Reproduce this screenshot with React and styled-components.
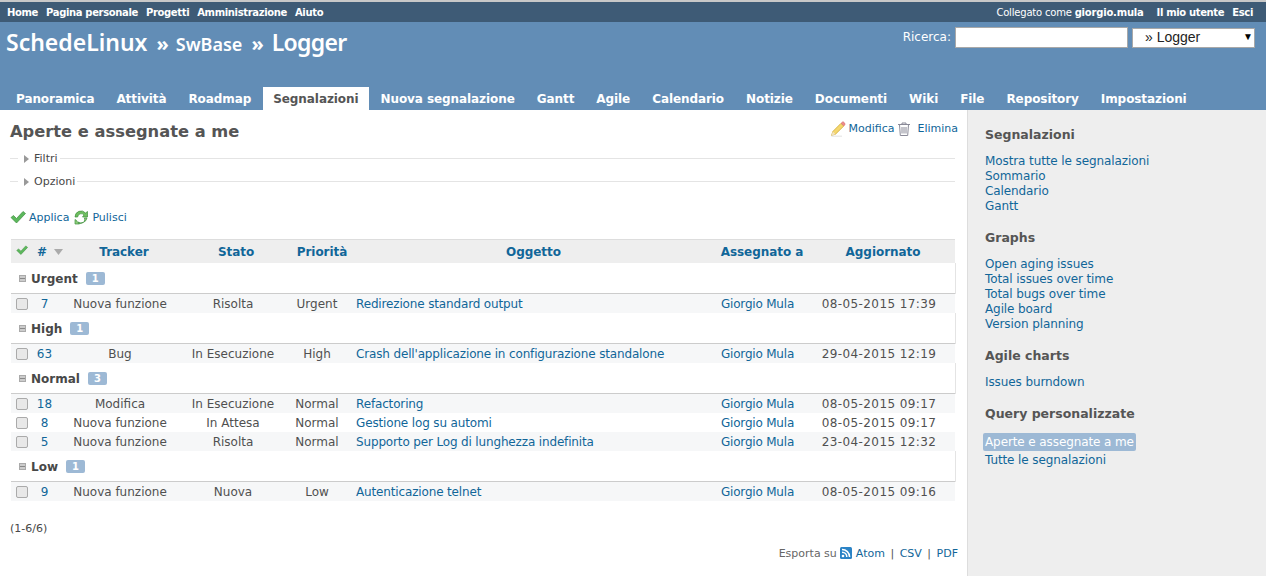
import React from 'react';
import styled, { createGlobalStyle } from 'styled-components';

const GlobalStyle = createGlobalStyle`
  html, body { margin: 0; padding: 0; height: 576px; overflow: hidden; background: #fff; }
  body { font-family: "DejaVu Sans", Verdana, sans-serif; font-size: 12px; color: #484848; }
  * { box-sizing: border-box; }
  a { color: #169; text-decoration: none; }
`;

const columns = [
  { label: 'Tracker', width: 128, shift: 8 },
  { label: 'Stato', width: 98, shift: 6 },
  { label: 'Priorità', width: 70, shift: 10 },
  { label: 'Oggetto', width: 361, shift: 2 },
  { label: 'Assegnato a', width: 98, shift: 0 },
  { label: 'Aggiornato', width: 144, shift: 0 },
];

const groups = [
  {
    name: 'Urgent', count: 1, rows: [
      { id: 7, tracker: 'Nuova funzione', status: 'Risolta', priority: 'Urgent', subject: 'Redirezione standard output', updated: '08-05-2015 17:39' },
    ],
  },
  {
    name: 'High', count: 1, rows: [
      { id: 63, tracker: 'Bug', status: 'In Esecuzione', priority: 'High', subject: "Crash dell'applicazione in configurazione standalone", updated: '29-04-2015 12:19' },
    ],
  },
  {
    name: 'Normal', count: 3, rows: [
      { id: 18, tracker: 'Modifica', status: 'In Esecuzione', priority: 'Normal', subject: 'Refactoring', updated: '08-05-2015 09:17' },
      { id: 8, even: true, tracker: 'Nuova funzione', status: 'In Attesa', priority: 'Normal', subject: 'Gestione log su automi', updated: '08-05-2015 09:17' },
      { id: 5, tracker: 'Nuova funzione', status: 'Risolta', priority: 'Normal', subject: 'Supporto per Log di lunghezza indefinita', updated: '23-04-2015 12:32' },
    ],
  },
  {
    name: 'Low', count: 1, rows: [
      { id: 9, tracker: 'Nuova funzione', status: 'Nuova', priority: 'Low', subject: 'Autenticazione telnet', updated: '08-05-2015 09:16' },
    ],
  },
];

const tabs = ['Panoramica', 'Attività', 'Roadmap', 'Segnalazioni', 'Nuova segnalazione', 'Gantt', 'Agile', 'Calendario', 'Notizie', 'Documenti', 'Wiki', 'File', 'Repository', 'Impostazioni'];

const sidebar = [
  { title: 'Segnalazioni', links: ['Mostra tutte le segnalazioni', 'Sommario', 'Calendario', 'Gantt'] },
  { title: 'Graphs', links: ['Open aging issues', 'Total issues over time', 'Total bugs over time', 'Agile board', 'Version planning'] },
  { title: 'Agile charts', links: ['Issues burndown'] },
  { title: 'Query personalizzate', links: ['Aperte e assegnate a me', 'Tutte le segnalazioni'], selected: 0 },
];

const CheckIcon = ({ size = 16 }) => (
  <svg width={size} height={size} viewBox="0 0 16 16">
    <path d="M1 8.5 L3.5 6.5 L6.5 9.5 L13 2.5 L15.5 4.5 L6.5 14 Z" fill="#5cb85c" stroke="#3f8f3f" strokeWidth="0.7" strokeLinejoin="round" />
  </svg>
);

const ReloadIcon = () => (
  <svg width="16" height="16" viewBox="0 0 16 16">
    <path d="M2 8 A6 6 0 0 1 12.5 4 L14.5 2.5 L14.5 8 L9.5 8 L11 6 A3.6 3.6 0 0 0 4.6 8 Z" fill="#6fbf5f" stroke="#3f8f3f" strokeWidth="0.7" strokeLinejoin="round" />
    <path d="M14 9 A6 6 0 0 1 5 13 L6.5 15 L2 15 L2 10.5 L3.6 11.5 A3.6 3.6 0 0 0 11.4 9 Z" fill="#8fd07a" stroke="#3f8f3f" strokeWidth="0.7" strokeLinejoin="round" />
  </svg>
);

const PencilIcon = () => (
  <svg width="16" height="16" viewBox="0 0 16 16">
    <path d="M1.5 14.5 L2.8 10.5 L11 2.3 L13.8 5 L5.5 13.2 Z" fill="#f5d76e" stroke="#c9a227" strokeWidth="0.7" strokeLinejoin="round" />
    <path d="M11 2.3 L12.2 1.2 C12.8 .7 13.4 .8 13.9 1.3 L14.8 2.2 C15.2 2.7 15.2 3.4 14.8 3.9 L13.8 5 Z" fill="#ee8a8a" stroke="#cc6a6a" strokeWidth="0.5" />
    <path d="M1.5 14.5 L2.8 10.5 L5.5 13.2 Z" fill="#f3e3c0" />
    <path d="M1.5 15.2 L12 15.2" stroke="#e6e6e6" strokeWidth="1.2" />
  </svg>
);

const TrashIcon = () => (
  <svg width="16" height="16" viewBox="0 0 16 16" fill="none" stroke="#8a8a98" strokeWidth="1">
    <path d="M2 3.5 H14" />
    <path d="M6 3.5 V2 H10 V3.5" />
    <path d="M3.5 3.5 L4.3 14.5 H11.7 L12.5 3.5" />
    <path d="M6 6 V12.5 M8 6 V12.5 M10 6 V12.5" />
  </svg>
);

const RssIcon = () => (
  <svg width="12" height="12" viewBox="0 0 12 12">
    <rect width="12" height="12" rx="1.5" fill="#2b83c6" />
    <circle cx="3" cy="9" r="1.3" fill="#fff" />
    <path d="M2 5.2 A4.8 4.8 0 0 1 6.8 10 M2 2.4 A7.6 7.6 0 0 1 9.6 10" fill="none" stroke="#fff" strokeWidth="1.5" />
  </svg>
);

const SortIcon = () => (
  <svg width="9" height="6" viewBox="0 0 9 6"><path d="M0 0 H9 L4.5 6 Z" fill="#aaa" /></svg>
);

const App = () => (
  <Page>
    <GlobalStyle />
    <TopMenu>
      <TopLinks>
        {['Home', 'Pagina personale', 'Progetti', 'Amministrazione', 'Aiuto'].map((item) => <TopLink key={item}>{item}</TopLink>)}
      </TopLinks>
      <TopLinks>
        <LoggedAs>Collegato come <b>giorgio.mula</b></LoggedAs>
        <TopLink>Il mio utente</TopLink>
        <TopLink>Esci</TopLink>
      </TopLinks>
    </TopMenu>
    <Header>
      <HeaderRow>
        <Title>
          <span>SchedeLinux</span>
          <Chevron>»</Chevron>
          <Crumb>SwBase</Crumb>
          <Chevron>»</Chevron>
          <ProjectName>Logger</ProjectName>
        </Title>
        <SearchBox>
          <SearchLabel>Ricerca:</SearchLabel>
          <SearchInput />
          <ProjectSelect>» Logger<SelectArrow>▼</SelectArrow></ProjectSelect>
        </SearchBox>
      </HeaderRow>
      <Tabs>
        {tabs.map((tab) => <Tab key={tab} $selected={tab === 'Segnalazioni'}>{tab}</Tab>)}
      </Tabs>
    </Header>
    <Main>
      <Content>
        <TitleRow>
          <Heading>Aperte e assegnate a me</Heading>
          <Actions>
            <PencilIcon /><ActionLink>Modifica</ActionLink>
            <TrashIcon /><ActionLink>Elimina</ActionLink>
          </Actions>
        </TitleRow>
        <Collapsed><Arrow />Filtri</Collapsed>
        <Collapsed><Arrow />Opzioni</Collapsed>
        <Buttons>
          <CheckIcon /><ButtonLink>Applica</ButtonLink>
          <ReloadIcon /><ButtonLink>Pulisci</ButtonLink>
        </Buttons>
        <IssueTable>
          <colgroup>
            <col width="22" />
            <col width="23" />
            {columns.map((c) => <col key={c.label} width={c.width} />)}
          </colgroup>
          <thead>
            <tr>
              <HeadCell><CheckIcon size={12} /></HeadCell>
              <IdHead>#<SortIcon /></IdHead>
              {columns.map((c) => <HeadCell key={c.label} $shift={c.shift}>{c.label}</HeadCell>)}
            </tr>
          </thead>
          <tbody>
            {groups.map((group) => (
              <React.Fragment key={group.name}>
                <GroupRow>
                  <td colSpan={8}>
                    <GroupLabel>
                      <Collapser />
                      {group.name}
                      <Badge>{group.count}</Badge>
                    </GroupLabel>
                  </td>
                </GroupRow>
                {group.rows.map((row) => (
                  <IssueRow key={row.id} $even={row.even}>
                    <td><FakeCheck /></td>
                    <td><a>{row.id}</a></td>
                    <td>{row.tracker}</td>
                    <td>{row.status}</td>
                    <td>{row.priority}</td>
                    <SubjectCell><a>{row.subject}</a></SubjectCell>
                    <AssigneeCell><a>Giorgio Mula</a></AssigneeCell>
                    <DateCell>{row.updated}</DateCell>
                  </IssueRow>
                ))}
              </React.Fragment>
            ))}
          </tbody>
        </IssueTable>
        <Pagination>(1-6/6)</Pagination>
        <Export>
          Esporta su <RssIcon /> <a>Atom</a> <Sep>|</Sep> <a>CSV</a> <Sep>|</Sep> <a>PDF</a>
        </Export>
      </Content>
      <Sidebar>
        {sidebar.map((section) => (
          <section key={section.title}>
            <SideTitle>{section.title}</SideTitle>
            <SideLinks>
              {section.links.map((link, i) => (
                <SideItem key={link} $selected={section.selected === i}>
                  <SideLink $selected={section.selected === i}>{link}</SideLink>
                </SideItem>
              ))}
            </SideLinks>
          </section>
        ))}
      </Sidebar>
    </Main>
  </Page>
);

const Page = styled.div`
  height: 576px;
  border-top: 2px solid #c8c8c8;
  display: flex;
  flex-direction: column;
  overflow: hidden;
`;

const TopMenu = styled.div`
  height: 20px;
  background: #3e5b76;
  color: #fff;
  display: flex;
  justify-content: space-between;
  align-items: center;
  padding: 0 13px 0 7px;
  font-size: 10px;
  letter-spacing: -0.35px;
`;

const TopLinks = styled.div`
  display: flex;
  gap: 8px;
`;

const TopLink = styled.span`
  font-weight: bold;
`;

const LoggedAs = styled.span`
  margin-right: 5px;
  letter-spacing: -0.2px;
`;

const Header = styled.div`
  height: 88px;
  background: #628db6;
  color: #fff;
  display: flex;
  flex-direction: column;
  justify-content: space-between;
`;

const HeaderRow = styled.div`
  display: flex;
  justify-content: space-between;
  align-items: flex-start;
  padding: 5px 11px 0 6px;
`;

const Title = styled.div`
  display: flex;
  align-items: baseline;
  gap: 7px;
  font-family: "Noto Sans", sans-serif;
  font-size: 23px;
  line-height: 30px;
  font-weight: 600;
`;

const Crumb = styled.span`
  font-size: 18px;
`;

const Chevron = styled.span`
  font-size: 20px;
  font-weight: 700;
  margin-left: 2px;
`;

const ProjectName = styled.span`
  margin-left: 1px;
  letter-spacing: -0.7px;
`;

const SearchBox = styled.div`
  display: flex;
  align-items: center;
`;

const SearchLabel = styled.span`
  margin: -2px 4px 0 0;
  font-size: 12px;
`;

const SearchInput = styled.input`
  width: 173px;
  height: 21px;
  border: 1px solid #a8a8a8;
  background: #fff;
  padding: 0;
  margin-right: 4px;
`;

const ProjectSelect = styled.div`
  position: relative;
  width: 123px;
  height: 20px;
  border: 1px solid #a8a8a8;
  background: #fff;
  color: #222;
  font-family: "Liberation Sans", Arial, sans-serif;
  font-size: 14px;
  line-height: 17px;
  padding-left: 12px;
`;

const SelectArrow = styled.span`
  position: absolute;
  right: 1px;
  top: 0;
  font-size: 10px;
  line-height: 15px;
  color: #000;
`;

const Tabs = styled.div`
  display: flex;
  gap: 2px;
  padding-left: 6px;
`;

const Tab = styled.div`
  height: 23px;
  line-height: 24px;
  padding: 0 10px;
  font-weight: bold;
  font-size: 12px;
  letter-spacing: -0.08px;
  background: ${({ $selected }) => ($selected ? '#fff' : 'transparent')};
  color: ${({ $selected }) => ($selected ? '#555' : '#fff')};
`;

const Main = styled.div`
  flex: 1;
  display: flex;
  min-height: 0;
`;

const Content = styled.div`
  width: 968px;
  padding: 0 12px 0 10px;
  border-right: 1px solid #ddd;
  background: #fff;
`;

const TitleRow = styled.div`
  display: flex;
  justify-content: space-between;
  height: 37px;
  padding-top: 10px;
`;

const Heading = styled.h2`
  margin: 0;
  font-size: 16.3px;
  line-height: 24px;
  font-weight: bold;
  color: #555;
`;

const Actions = styled.div`
  display: flex;
  align-items: center;
  height: 19px;
  gap: 2px;
  margin: -1px -3px 0 0;

  a:last-child { margin-left: 3px; }
`;

const ActionLink = styled.a`
  font-size: 11px;
  color: #169;
`;

const ButtonLink = styled(ActionLink)`
  margin-right: 1px;
`;

const Collapsed = styled.div`
  display: flex;
  align-items: center;
  height: 23px;
  font-size: 11px;
  color: #484848;

  &::before {
    content: '';
    width: 8px;
    border-top: 1px solid #e4e4e4;
  }

  &::after {
    content: '';
    flex: 1;
    margin-left: 2px;
    border-top: 1px solid #e4e4e4;
  }
`;

const Arrow = styled.span`
  width: 0;
  height: 0;
  margin: 0 5px 0 6px;
  border-left: 5px solid #999;
  border-top: 4px solid transparent;
  border-bottom: 4px solid transparent;
`;

const Buttons = styled.div`
  display: flex;
  align-items: center;
  gap: 3px;
  height: 20px;
  margin: 14px 0 12px;
`;

const IssueTable = styled.table`
  width: 944px;
  margin-left: 1px;
  border-collapse: collapse;
  table-layout: fixed;
  font-size: 12px;
  text-align: center;

  td { padding: 0; }
`;

const HeadCell = styled.th`
  height: 23px;
  background: #eee;
  color: #169;
  font-size: 12px;
  font-weight: bold;
  letter-spacing: -0.05px;
  padding: 1px 0 0 ${({ $shift }) => $shift || 0}px;
  border-top: 1px solid #ddd;
`;

const IdHead = styled(HeadCell)`
  text-align: left;
  padding-left: 4px;
  white-space: nowrap;

  svg { margin-left: 7px; vertical-align: 1px; }
`;

const GroupRow = styled.tr`
  height: 31px;
  text-align: left;
  border-bottom: 1px solid #ccc;

  td { border-right: 1px solid #e4e4e4; }
`;

const GroupLabel = styled.div`
  display: flex;
  align-items: center;
  font-weight: bold;
  color: #484848;
  padding: 2px 0 0 8px;
`;

const Collapser = styled.span`
  width: 7px;
  height: 7px;
  margin-right: 5px;
  background: linear-gradient(#888, #888) center / 5px 1px no-repeat, #ccc;
  border: 1px solid #aaa;
`;

const Badge = styled.span`
  margin-left: 8px;
  min-width: 19px;
  height: 13px;
  padding: 0 6px;
  border-radius: 2px;
  background: #9db9d5;
  color: #fff;
  font-size: 10px;
  line-height: 13px;
  text-align: center;
`;

const IssueRow = styled.tr`
  height: 19px;
  background: ${({ $even }) => ($even ? '#fff' : '#f6f7f8')};
  color: #505050;

  td { padding-top: 1px; }
`;

const FakeCheck = styled.span`
  display: block;
  width: 12px;
  height: 12px;
  margin-left: 5px;
  border: 1px solid #aaa;
  border-radius: 2px;
  background: #e8e8e8;
`;

const SubjectCell = styled.td`
  text-align: left;
  padding-left: 4px !important;
  letter-spacing: -0.15px;
`;

const AssigneeCell = styled.td`
  text-align: left;
  padding-left: 8px !important;
  white-space: nowrap;
  letter-spacing: -0.2px;
`;

const DateCell = styled.td`
  padding-right: 8px !important;
  letter-spacing: 0.4px;
  white-space: nowrap;
`;

const Pagination = styled.p`
  margin: 21px 0 0;
  font-size: 11px;
  line-height: 14px;
`;

const Export = styled.p`
  margin: 11px -3px 0 0;
  font-size: 11px;
  line-height: 14px;
  text-align: right;
  color: #666;

  svg { vertical-align: -2px; }
`;

const Sep = styled.span`
  margin: 0 2px;
  color: #555;
`;

const Sidebar = styled.div`
  flex: 1;
  background: #eee;
  padding: 17px 17px 0;
`;

const SideTitle = styled.h3`
  margin: 0 0 11px;
  font-size: 12.5px;
  line-height: 16px;
  font-weight: bold;
  color: #555;
`;

const SideLinks = styled.ul`
  list-style: none;
  margin: 0 0 16px;
  padding: 0;
  font-size: 12px;
  line-height: 15px;
  letter-spacing: -0.1px;
`;

const SideItem = styled.li`
  margin-bottom: ${({ $selected }) => ($selected ? '2px' : '0')};
  height: ${({ $selected }) => ($selected ? '18px' : '15px')};
`;

const SideLink = styled.a`
  display: inline-block;
  color: ${({ $selected }) => ($selected ? '#fff' : '#169')};
  background: ${({ $selected }) => ($selected ? '#9db9d5' : 'transparent')};
  border-radius: 2px;
  line-height: ${({ $selected }) => ($selected ? '18px' : '15px')};
  padding: ${({ $selected }) => ($selected ? '0 2px' : '0')};
  margin-left: ${({ $selected }) => ($selected ? '-2px' : '0')};
`;

export default App;
